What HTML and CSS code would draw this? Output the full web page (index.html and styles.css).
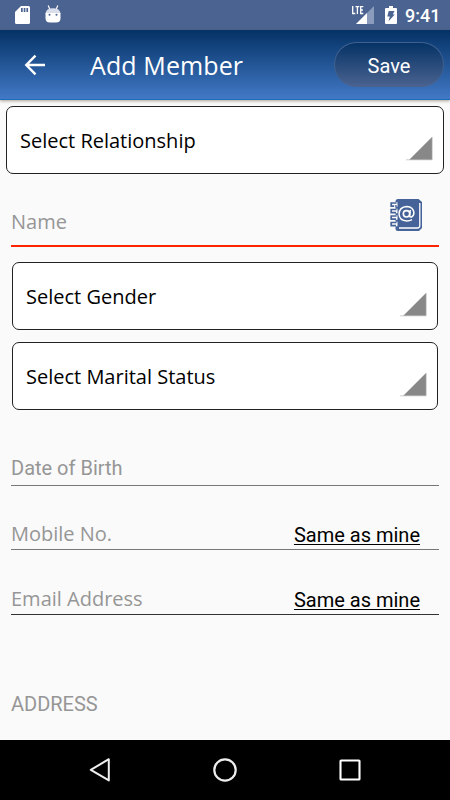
FILE: index.html
```html
<!DOCTYPE html>
<html lang="en">
<head>
<meta charset="utf-8">
<title>Add Member</title>
<link rel="stylesheet" href="styles.css">
</head>
<body>
<div class="status">
  <svg class="sd" width="16" height="20" viewBox="0 0 16 20"><path fill="#fff" d="M6 1h7.500q1.500 0 1.500 1.500v15q0 1.500-1.500 1.500h-12Q0 19 0 17.500V7z"/><path fill="#4b6390" d="M6 3h1.700v4H6zM8.700 3h1.700v4H8.700zM11.400 3h1.700v4h-1.700z"/></svg>
  <svg class="droid" width="16" height="20" viewBox="0 0 16 20"><path d="M3.200 .5l1.500 3.500M12.800 .5L11.300 4" stroke="#fff" stroke-width="1.200"/><path fill="#d9deea" d="M.5 8.500Q1 3.300 8 3.300T15.500 8.500z"/><path fill="#fff" d="M.5 8h15v5q0 4.500-4.500 4.500H5Q.5 17.500.5 13z"/><circle cx="4.500" cy="9.800" r="1" fill="#4b6390"/><circle cx="11.500" cy="9.800" r="1" fill="#4b6390"/></svg>
  <span class="grow"></span>
  <svg class="signal" width="24" height="22" viewBox="0 0 24 22"><path fill="#8b9bbb" d="M23 2v18H5z"/><path fill="#fff" d="M16 9v11H5z"/><path d="M1.700 2v7.500h2.600M4.500 2.600h3.800M6.400 2.600V10M12.300 2.600H9.700v6.900h2.600M9.700 6h2.200" fill="none" stroke="#fff" stroke-width="1.300"/></svg>
  <svg class="battery" width="12" height="20" viewBox="0 0 12 20"><path fill="#fff" d="M4 1h4v2h3q1 0 1 1v14q0 1-1 1H1q-1 0-1-1V4q0-1 1-1h3z"/><path fill="#4b6390" d="M3.700 6H9.500L7.800 9.500h2L3.500 16.200l1.300-4.700H2.300z"/></svg>
  <span class="time">9:41</span>
</div>
<header class="appbar">
  <svg class="back" width="22" height="22" viewBox="0 0 22 22"><path d="M11.500 1.700L2.300 11l9.200 9.300M2.500 11H21" fill="none" stroke="#fff" stroke-width="2.400"/></svg>
  <h1 class="title">Add Member</h1>
  <button class="save">Save</button>
</header>
<main class="form">
  <div class="select wide"><span>Select Relationship</span><svg class="caret" width="27" height="25" viewBox="0 0 27 25"><path fill="#888" d="M26 1v23H3z"/><path d="M0 23.800h26.300V1" fill="none" stroke="#c4c4c4" stroke-width=".8"/></svg></div>
  <div class="field name"><span class="label">Name</span>
    <svg class="book" width="33" height="34" viewBox="0 0 33 34"><path fill="#456399" d="M8 1h20.500l3.500 3v26l-3 3H8q-2.500 0-2.500-2.500v-27Q5.500 1 8 1z"/><path d="M29.800 5v22.500q0 2.500-2.500 2.500H9" fill="none" stroke="#fff" stroke-width="1.300"/><path d="M4.500 6.500h3M4.500 13h3M4.500 19.500h3M4.500 26h3" fill="none" stroke="#fafafa" stroke-width="4.600"/><path d="M6.800 8H4.800M6.500 5H1.200v3.200H4M6.500 11.500H1.200v3.200H6M6.500 18H1.200v3.200H6M6.500 24.500H1.200v3.200H6" fill="none" stroke="#456399" stroke-width="1.700"/><circle cx="16.500" cy="15.800" r="3.200" fill="none" stroke="#fff" stroke-width="1.600"/><path d="M20.300 12l-.7 5.800q.2 1.700 1.900 1.200 2.400-1.200 2.400-4.200Q23.300 8.800 16.800 8.500 9.300 9 9 16q.5 6.700 7.800 7 3 0 5.200-1.300" fill="none" stroke="#fff" stroke-width="1.500"/></svg>
  </div>
  <div class="select gender"><span>Select Gender</span><svg class="caret" width="27" height="25" viewBox="0 0 27 25"><path fill="#888" d="M26 1v23H3z"/><path d="M0 23.800h26.300V1" fill="none" stroke="#c4c4c4" stroke-width=".8"/></svg></div>
  <div class="select marital"><span>Select Marital Status</span><svg class="caret" width="27" height="25" viewBox="0 0 27 25"><path fill="#888" d="M26 1v23H3z"/><path d="M0 23.800h26.300V1" fill="none" stroke="#c4c4c4" stroke-width=".8"/></svg></div>
  <div class="field dob"><span class="label roboto">Date of Birth</span></div>
  <div class="field mobile"><span class="label">Mobile No.</span><a class="same">Same as mine</a></div>
  <div class="field email"><span class="label">Email Address</span><a class="same">Same as mine</a></div>
  <h2 class="section">ADDRESS</h2>
</main>
<nav class="navbar">
  <svg width="24" height="26" viewBox="0 0 24 26"><path d="M20.800 2.200v21.200L2.800 12.800z" fill="none" stroke="#eee" stroke-width="2" stroke-linejoin="round"/></svg>
  <svg width="24" height="26" viewBox="0 0 24 26"><circle cx="12" cy="13" r="10.700" fill="none" stroke="#eee" stroke-width="2.200"/></svg>
  <svg width="24" height="26" viewBox="0 0 24 26"><rect x="2.500" y="3.500" width="19" height="19" rx=".6" fill="none" stroke="#fff" stroke-width="2.100"/></svg>
</nav>
</body>
</html>
```
FILE: styles.css
```css
* { box-sizing: border-box; }
body {
  margin: 0;
  width: 450px;
  height: 800px;
  display: flex;
  flex-direction: column;
  overflow: hidden;
  background: #fafafa;
  font-family: "Open Sans", sans-serif;
  font-size: 20px;
}
svg { display: block; flex: none; }
.status {
  height: 30px;
  flex: none;
  display: flex;
  align-items: center;
  padding: 0 11px 0 15px;
  background: #4b6390;
  color: #fff;
}
.droid { margin-left: 14px; }
.grow { flex: 1; }
.battery { margin-left: 10px; }
.time {
  margin-left: 8px;
  width: 34px;
  font: 500 18px/31px Roboto, sans-serif;
  white-space: nowrap;
}
.appbar {
  height: 70px;
  flex: none;
  display: flex;
  align-items: center;
  padding: 0 6px 0 24px;
  background: linear-gradient(#043265, #4279c6);
  border-bottom: 1px solid #1b6cba;
  box-shadow: 0 1px 3px rgba(90, 75, 50, .5);
  color: #fff;
}
.title {
  margin: 0 0 0 44px;
  flex: 1;
  font-size: 25px;
  font-weight: 400;
  line-height: 70px;
  letter-spacing: .1px;
}
.save {
  width: 110px;
  height: 45px;
  padding: 2px 0 0;
  border: 1px solid #3e608f;
  border-bottom-color: #4b6390;
  border-radius: 23px;
  background: linear-gradient(#043265, #4b6390);
  background-origin: border-box;
  color: #fff;
  font: 20px Roboto, sans-serif;
}
.form {
  flex: 1;
  min-height: 0;
  display: flex;
  flex-direction: column;
  padding: 6px 11px 0;
}
.select {
  flex: none;
  height: 68px;
  margin: 0 1px;
  display: flex;
  justify-content: space-between;
  align-items: flex-start;
  padding: 0 9px 0 13px;
  border: 1px solid #222;
  border-radius: 7px;
  background: #fff;
  color: #000;
  line-height: 68px;
}
.wide { margin: 0 -5px; }
.caret { margin: 29px 1px 0 0; }
.field {
  flex: none;
  display: flex;
  justify-content: space-between;
  align-items: flex-end;
  border-bottom: 1px solid #777;
}
.label { color: #969696; line-height: 27px; }
.name { height: 73px; border-bottom: 2px solid #ff2400; }
.name .label { margin-bottom: 10px; }
.book { margin: 0 16px 13px 0; }
.gender { margin-top: 15px; }
.marital { margin-top: 12px; }
.dob { height: 76px; }
.dob .label { margin-bottom: 3px; }
.roboto, .same, .section { font-family: Roboto, sans-serif; }
.mobile { height: 64px; }
.email { height: 65px; border-bottom-color: #333; }
.mobile .label, .email .label { margin-bottom: 2px; }
.same {
  margin-right: 19px;
  color: #000;
  line-height: 27px;
  text-decoration: underline;
  text-decoration-thickness: 1px;
  text-underline-offset: 2px;
}
.section {
  margin: 76px 0 0;
  color: #969696;
  font-size: 20px;
  font-weight: 400;
  line-height: 27px;
}
.navbar {
  height: 60px;
  flex: none;
  display: flex;
  justify-content: center;
  align-items: center;
  gap: 101px;
  background: #000;
}
```
